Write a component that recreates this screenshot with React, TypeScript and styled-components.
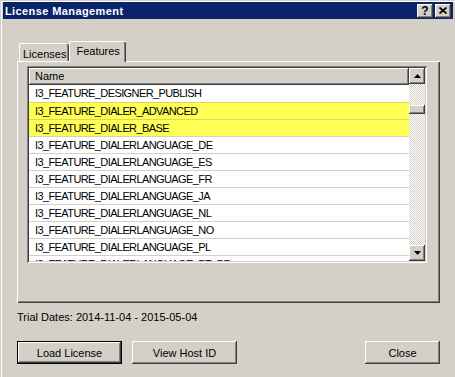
import styled, { createGlobalStyle } from "styled-components";

const GlobalStyle = createGlobalStyle`
  html, body {
    margin: 0;
    background: #d4d0c8;
  }
  body {
    font-family: "Liberation Sans", Arial, sans-serif;
    font-size: 11px;
    color: #000;
  }
`;

const raised = `
  box-shadow: inset -1px -1px #404040, inset 1px 1px #fff,
    inset -2px -2px #808080, inset 2px 2px #d4d0c8;
`;

const features = [
  { name: "I3_FEATURE_DESIGNER_PUBLISH", marked: false },
  { name: "I3_FEATURE_DIALER_ADVANCED", marked: true },
  { name: "I3_FEATURE_DIALER_BASE", marked: true },
  { name: "I3_FEATURE_DIALERLANGUAGE_DE", marked: false },
  { name: "I3_FEATURE_DIALERLANGUAGE_ES", marked: false },
  { name: "I3_FEATURE_DIALERLANGUAGE_FR", marked: false },
  { name: "I3_FEATURE_DIALERLANGUAGE_JA", marked: false },
  { name: "I3_FEATURE_DIALERLANGUAGE_NL", marked: false },
  { name: "I3_FEATURE_DIALERLANGUAGE_NO", marked: false },
  { name: "I3_FEATURE_DIALERLANGUAGE_PL", marked: false },
  { name: "I3_FEATURE_DIALERLANGUAGE_PT_BR", marked: false },
];

export default function App() {
  return (
    <>
      <GlobalStyle />
      <Window>
        <TitleBar>
          <TitleText>License Management</TitleText>
          <CaptionButton>?</CaptionButton>
          <CaptionButton>
            <svg width="8" height="7" viewBox="0 0 8 7">
              <path d="M0.5 0.5 L7.5 6.5 M7.5 0.5 L0.5 6.5" stroke="#000" strokeWidth="1.7" />
            </svg>
          </CaptionButton>
        </TitleBar>

        <Body>
          <TabStrip>
            <Tab>Licenses</Tab>
            <Tab $active>Features</Tab>
          </TabStrip>
          <Panel>
            <ListBox>
              <ListRows>
                <HeaderCell>Name</HeaderCell>
                {features.map((f, i) => (
                  <Row key={f.name} $marked={f.marked} $first={i === 0}>
                    {f.name}
                  </Row>
                ))}
              </ListRows>
              <ScrollBar>
                <ScrollButton>
                  <svg width="7" height="4" viewBox="0 0 7 4">
                    <path d="M3.5 0 L7 4 L0 4 Z" fill="#000" />
                  </svg>
                </ScrollButton>
                <Thumb $offset={21} />
                <Track />
                <ScrollButton>
                  <svg width="7" height="4" viewBox="0 0 7 4">
                    <path d="M0 0 L7 0 L3.5 4 Z" fill="#000" />
                  </svg>
                </ScrollButton>
              </ScrollBar>
            </ListBox>
          </Panel>

          <TrialText>Trial Dates: 2014-11-04 - 2015-05-04</TrialText>

          <ButtonRow>
            <PushButton $width={105} $default>Load License</PushButton>
            <PushButton $width={105}>View Host ID</PushButton>
            <CloseButton $width={75}>Close</CloseButton>
          </ButtonRow>
        </Body>
      </Window>
    </>
  );
}

const Window = styled.div`
  width: 455px;
  height: 377px;
  box-sizing: border-box;
  padding: 2px 2px 0 3px;
  background: #d4d0c8;
  box-shadow: inset 1px 1px #d4d0c8, inset 2px 2px #fff;
  overflow: hidden;
`;

const TitleBar = styled.div`
  display: flex;
  align-items: center;
  gap: 2px;
  height: 17px;
  padding: 0 2px;
  background: #0a246a;
`;

const TitleText = styled.div`
  flex: 1;
  color: #fff;
  font-weight: bold;
  letter-spacing: 0.4px;
`;

const CaptionButton = styled.div`
  display: flex;
  align-items: center;
  justify-content: center;
  width: 16px;
  height: 14px;
  background: #d4d0c8;
  font-weight: bold;
  font-size: 12px;
  ${raised}
`;

const Body = styled.div`
  display: flex;
  flex-direction: column;
  padding: 22px 13px 0 14px;
`;

const TabStrip = styled.div`
  position: relative;
  z-index: 1;
  display: flex;
  align-items: flex-end;
  height: 21px;
  margin-bottom: -1px;
  padding-left: 2px;
`;

const Tab = styled.div<{ $active?: boolean }>`
  box-sizing: border-box;
  height: ${(p) => (p.$active ? "21px" : "18px")};
  margin-bottom: ${(p) => (p.$active ? "0" : "1px")};
  padding: ${(p) => (p.$active ? "2px 6px 0 6px" : "3px 3px 0 3px")};
  background: #d4d0c8;
  border-top: 1px solid #fff;
  border-left: 1px solid #fff;
  border-radius: 2px 2px 0 0;
  box-shadow: inset -1px 0 #404040, inset -2px 0 #808080;
  line-height: 14px;
`;

const Panel = styled.div`
  box-sizing: border-box;
  height: 242px;
  padding: 5px 13px 0 10px;
  box-shadow: inset 1px 1px #fff, inset -1px -1px #404040,
    inset -2px -2px #808080;
`;

const ListBox = styled.div`
  box-sizing: border-box;
  display: flex;
  height: 197px;
  padding: 2px;
  background: #fff;
  box-shadow: inset 1px 1px #808080, inset -1px -1px #fff,
    inset 2px 2px #404040, inset -2px -2px #d4d0c8;
`;

const ListRows = styled.div`
  flex: 1;
  display: flex;
  flex-direction: column;
  overflow: hidden;
`;

const HeaderCell = styled.div`
  flex-shrink: 0;
  height: 17px;
  padding-left: 6px;
  line-height: 16px;
  background: #d4d0c8;
  box-shadow: inset -1px -1px #404040, inset 1px 1px #fff,
    inset -2px -2px #808080;
`;

const Row = styled.div<{ $marked: boolean; $first: boolean }>`
  flex-shrink: 0;
  box-sizing: border-box;
  height: 17px;
  padding-left: 6px;
  line-height: 16px;
  white-space: nowrap;
  letter-spacing: -0.6px;
  background: ${(p) => (p.$marked ? "#ffff55" : "#fff")};
  border-top: ${(p) =>
    p.$first ? "none" : `1px solid ${p.$marked ? "#d8d860" : "#d4d0c8"}`};
`;

const ScrollBar = styled.div`
  display: flex;
  flex-direction: column;
  width: 16px;
  background-color: #fff;
  background-image: repeating-conic-gradient(#d4d0c8 0 25%, #fff 0 50%);
  background-size: 2px 2px;
`;

const ScrollButton = styled.div`
  display: flex;
  align-items: center;
  justify-content: center;
  flex-shrink: 0;
  height: 16px;
  background: #d4d0c8;
  ${raised}
`;

const Thumb = styled.div<{ $offset: number }>`
  flex-shrink: 0;
  height: 9px;
  margin-top: ${(p) => p.$offset}px;
  background: #d4d0c8;
  ${raised}
`;

const Track = styled.div`
  flex: 1;
`;

const TrialText = styled.div`
  margin-top: 7px;
  line-height: 14px;
`;

const ButtonRow = styled.div`
  display: flex;
  gap: 10px;
  margin-top: 17px;
`;

const PushButton = styled.button<{ $width: number; $default?: boolean }>`
  width: ${(p) => p.$width}px;
  height: 23px;
  padding: 0;
  border: none;
  background: #d4d0c8;
  color: #000;
  font-family: "Liberation Sans", Arial, sans-serif;
  font-size: 11px;
  box-shadow: ${(p) =>
    p.$default
      ? "inset 0 0 0 1px #000, inset -2px -2px #404040, inset 2px 2px #fff, inset -3px -3px #808080"
      : "inset -1px -1px #404040, inset 1px 1px #fff, inset -2px -2px #808080, inset 2px 2px #d4d0c8"};
`;

const CloseButton = styled(PushButton)`
  margin-left: auto;
`;
